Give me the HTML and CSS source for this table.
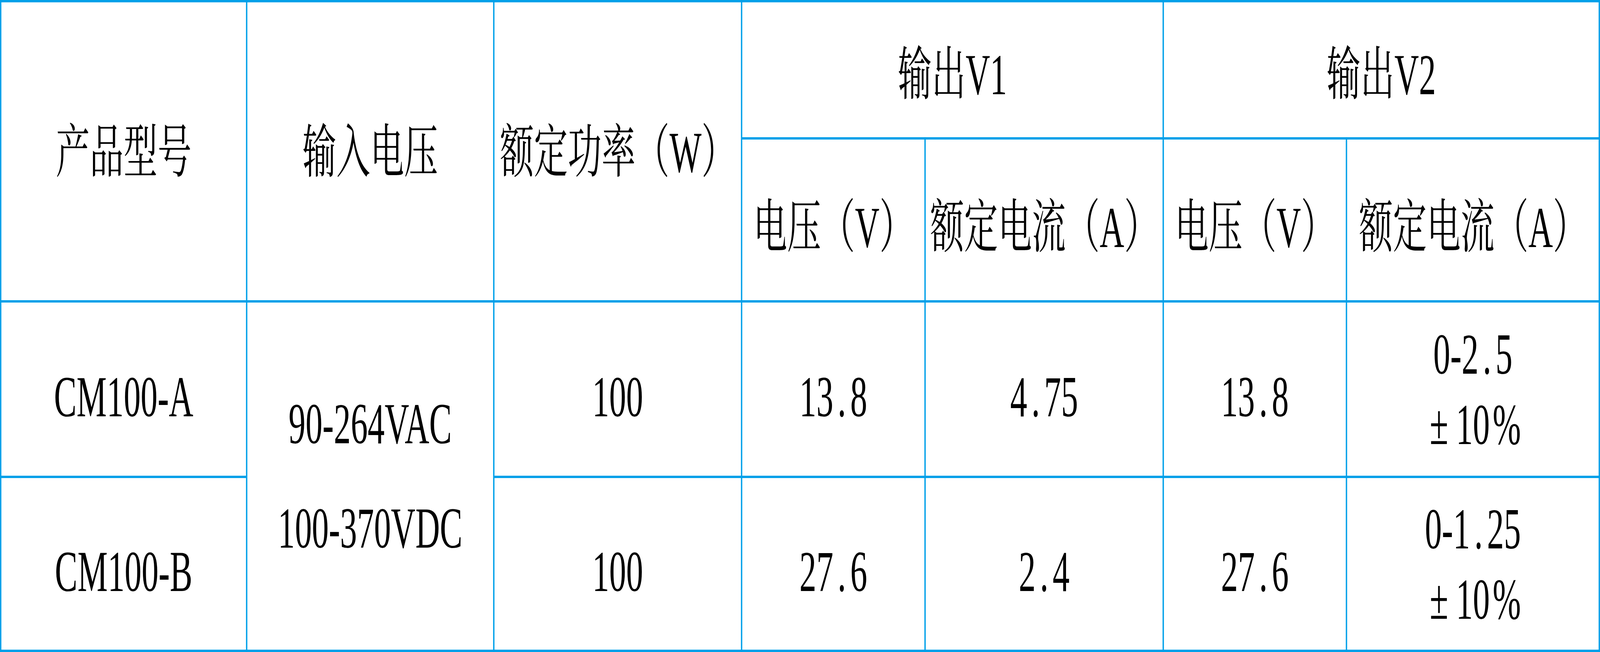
FILE: index.html
```html
<!DOCTYPE html>
<html lang="zh-CN">
<head>
<meta charset="utf-8">
<title>CM100 规格表</title>
<link rel="stylesheet" href="styles.css">
</head>
<body>
<div class="frame">
  <div class="page">
    <div class="spec-table">
      <div class="cell head tall"><span class="val">产品型号</span></div>
      <div class="cell head tall"><span class="val">输入电压</span></div>
      <div class="cell head tall"><span class="val">额定功率（W）</span></div>
      <div class="cell head group"><span class="val">输出V1</span></div>
      <div class="cell head group"><span class="val">输出V2</span></div>
      <div class="cell head sub"><span class="val">电压（V）</span></div>
      <div class="cell head sub"><span class="val">额定电流（A）</span></div>
      <div class="cell head sub"><span class="val">电压（V）</span></div>
      <div class="cell head sub"><span class="val">额定电流（A）</span></div>

      <div class="cell data"><span class="val">CM100-A</span></div>
      <div class="cell data input">
        <div class="input-line">90-264VAC</div>
        <div class="input-line">100-370VDC</div>
      </div>
      <div class="cell data"><span class="val">100</span></div>
      <div class="cell data"><span class="val">13<span class="dot">.</span>8</span></div>
      <div class="cell data"><span class="val">4<span class="dot">.</span>75</span></div>
      <div class="cell data"><span class="val">13<span class="dot">.</span>8</span></div>
      <div class="cell data range">
        <div class="range-line">0-2<span class="dot">.</span>5</div>
        <div class="range-line"><span class="fw">±</span>10<span class="fw">%</span></div>
      </div>

      <div class="cell data"><span class="val">CM100-B</span></div>
      <div class="cell data"><span class="val">100</span></div>
      <div class="cell data"><span class="val">27<span class="dot">.</span>6</span></div>
      <div class="cell data"><span class="val">2<span class="dot">.</span>4</span></div>
      <div class="cell data"><span class="val">27<span class="dot">.</span>6</span></div>
      <div class="cell data range">
        <div class="range-line">0-1<span class="dot">.</span>25</div>
        <div class="range-line"><span class="fw">±</span>10<span class="fw">%</span></div>
      </div>
    </div>
  </div>
</div>
</body>
</html>
```

FILE: styles.css
```css
html, body {
  margin: 0;
  padding: 0;
  background: #ffffff;
  overflow: hidden;
}

.frame {
  width: 100vw;
  height: 100vh;
  overflow: hidden;
}

/* The sheet is drawn at its native 6986 x 1668 size and fitted to the window */
.page {
  width: 6986px;
  height: 1668px;
  transform-origin: 0 0;
  transform: scale(0.58634, 1);
  transform: scale(tan(atan2(100vw, 6986px)), tan(atan2(100vh, 1668px)));
}

.spec-table {
  display: grid;
  grid-template-columns: 1068px 1073px 1076px 795px 1034px 794px 1098px;
  grid-template-rows: 345px 411px 443px 439px;
  gap: 6px;
  padding: 6px;
  background: #00a0e9;
  width: 6986px;
  height: 1668px;
  box-sizing: border-box;
  font-family: "Liberation Serif", "Noto Serif CJK SC", "Noto Sans CJK SC", serif;
  font-size: 148px;
  line-height: 1.2;
  color: #000000;
}

.cell {
  background: #ffffff;
  display: flex;
  flex-direction: column;
  align-items: center;
  justify-content: center;
  text-align: center;
  white-space: nowrap;
  box-sizing: border-box;
  min-width: 0;
}

.val {
  display: block;
}

.tall {
  grid-row: span 2;
  padding-top: 8px;
}

.group {
  grid-column: span 2;
  padding-top: 26px;
}

.sub {
  padding-top: 40px;
}

.data {
  padding-top: 40px;
}

.input {
  grid-row: span 2;
  gap: 89px;
  padding-top: 0;
}

.range {
  padding-top: 0;
}

.range-line {
  line-height: 180px;
}

.dot {
  display: inline-block;
  width: 0.5em;
  text-align: center;
}

.fw {
  display: inline-block;
  width: 1em;
  text-align: center;
}
```
